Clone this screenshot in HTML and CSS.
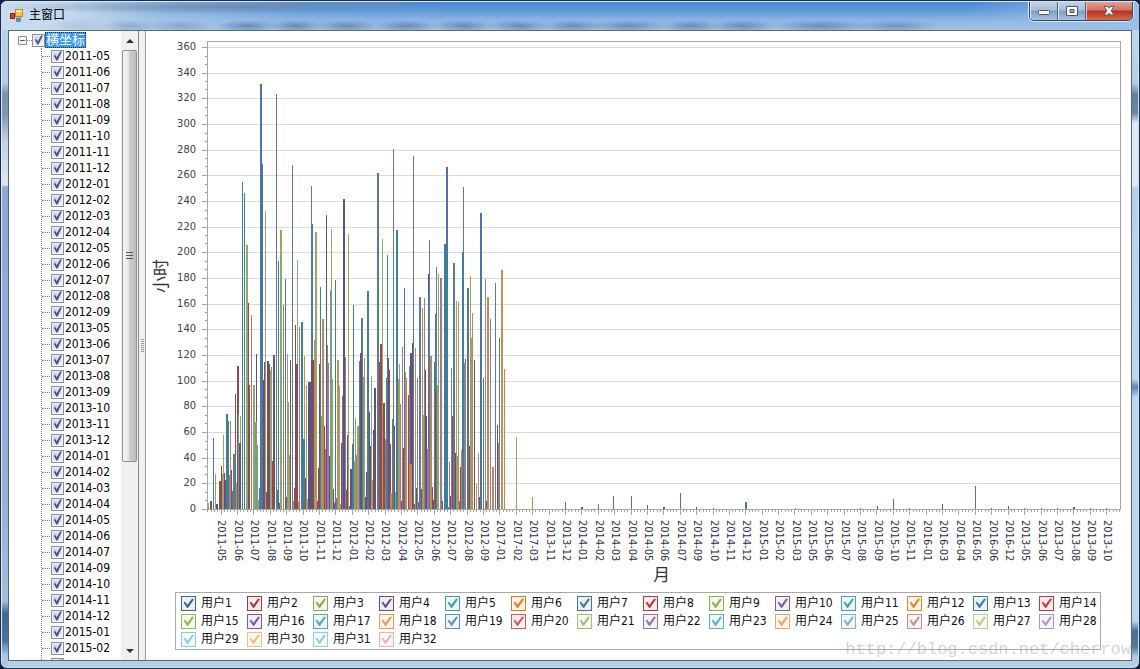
FILE: index.html
```html
<!DOCTYPE html>
<html lang="zh-CN">
<head>
<meta charset="utf-8">
<title>主窗口</title>
<link rel="stylesheet" href="styles.css">
</head>
<body>
<div class="window">
  <header class="titlebar">
    <svg class="app-icon" width="14" height="14" viewBox="0 0 14 14" aria-hidden="true">
      <rect x="5.5" y="1.5" width="7" height="7" fill="#f6c63c" stroke="#b98d1c"/>
      <rect x="6" y="2" width="6" height="2" fill="#fde58c"/>
      <rect x="0.5" y="5.5" width="4" height="5" fill="#d8402c" stroke="#8c1d16"/>
      <rect x="6.500" y="10" width="4" height="3.500" fill="#5c93b8" stroke="#3b6d91" stroke-width=".6"/>
    </svg>
    <h1 class="caption">主窗口</h1>
    <div class="controls">
      <button class="control" type="button" aria-label="最小化"><svg width="14" height="14" viewBox="0 0 14 14"><rect x="1.500" y="6.500" width="11" height="4" rx="1" fill="#fff" stroke="#4d5866"/></svg></button>
      <button class="control" type="button" aria-label="最大化"><svg width="14" height="14" viewBox="0 0 14 14"><path fill-rule="evenodd" d="M1.500 2.500h11v9h-11zM5 5.500v3h4v-3z" fill="#fff" stroke="#4d5866"/></svg></button>
      <button class="control control-close" type="button" aria-label="关闭"><svg width="14" height="14" viewBox="0 0 14 14"><path d="M2 2.500h3.500L7 4.300l1.500-1.800H12L9 6.700l3 4.300H8.500L7 9.200 5.500 11H2l3-4.300z" fill="#fff" stroke="#5d4a52" stroke-width=".9"/></svg></button>
    </div>
  </header>
  <main class="client">
    <aside class="tree-panel">
      <div class="tree">
        <div class="root">
          <button class="expander" type="button" aria-label="折叠"></button>
          <span class="dots"></span>
          <label class="node"><input class="tick" type="checkbox" checked><span class="selected">横坐标</span></label>
        </div>
        <div class="children" id="months"></div>
      </div>
      <div class="scrollbar">
        <span class="arrow arrow-up"></span>
        <span class="thumb"><i></i><i></i><i></i></span>
        <span class="track"></span>
        <span class="arrow arrow-down"></span>
      </div>
    </aside>
    <div class="splitter"><span class="grip"></span></div>
    <section class="chart-panel">
      <div class="chart">
        <div class="y-title"><span>小时</span></div>
        <div class="y-labels" id="y-labels"></div>
        <svg class="plot" id="plot" viewBox="202 41 919 477" preserveAspectRatio="none" shape-rendering="crispEdges"></svg>
        <div class="x-labels" id="x-labels"></div>
        <div class="x-title">月</div>
      </div>
      <div class="legend" id="legend"></div>
      <div class="watermark">http://blog.csdn.net/cherrow</div>
    </section>
  </main>
</div>
<script src="chart.js"></script>
</body>
</html>
```
FILE: styles.css
```css
* { box-sizing: border-box; }

body {
  margin: 0;
  background: #101d38;
  color: #111;
  font: 12px/16px "DejaVu Sans Condensed", "Noto Sans CJK SC", sans-serif;
}

.window {
  display: flex;
  flex-direction: column;
  height: 100vh;
  padding: 0 7px 7px;
  border: 1px solid #1b2c48;
  border-radius: 7px;
  background:
    linear-gradient(180deg, #b9d2ec 0, #b4cce6 82px, #7c94b0 92px, #8098b8 114px, #c4d2e4 140px, #dfe6f0 184px, #8fa8d4 186px, #98b0da 500px, #a4bedc 600px, #3f6a98 612px, #4a74a2 640px, #a9c6e2 654px) 0 0 / 7px 100% no-repeat,
    linear-gradient(180deg, #c9dcf0 0, #b4cce6 82px, #62809f 94px, #6c88a8 112px, #dfe8f3 122px, #dfe8f3 184px, #b4d0ee 187px, #bcd6ef 378px, #5f80b8 386px, #bcd6ef 396px, #bcd6ef 620px, #4a6f98 630px, #55799f 646px, #b4cce4 656px) 100% 0 / 7px 100% no-repeat,
    #b7cfe5;
  box-shadow: inset 1px 1px 0 #dcebfa, inset -1px -1px 0 #bfe4f5;
}

.titlebar {
  display: flex;
  flex: 0 0 29px;
  gap: 5px;
  margin: 0 -7px;
  padding-left: 9px;
  border-top: 1px solid #d9e8f8;
  border-radius: 6px 6px 0 0;
  background:
    radial-gradient(ellipse 30px 7px at 78px 24px, #6c8fb438, transparent),
    radial-gradient(ellipse 28px 6px at 128px 24px, #5d82ac70, transparent),
    radial-gradient(ellipse 34px 6px at 180px 24px, #5d82ac70, transparent),
    radial-gradient(ellipse 32px 6px at 246px 24px, #4f769fb0, transparent),
    radial-gradient(ellipse 28px 6px at 295px 24px, #4f769fb0, transparent),
    radial-gradient(ellipse 32px 6px at 346px 24px, #4f769fb0, transparent),
    radial-gradient(ellipse 32px 6px at 405px 24px, #4f769fb0, transparent),
    radial-gradient(ellipse 32px 6px at 462px 24px, #4f769fb0, transparent),
    radial-gradient(ellipse 32px 6px at 518px 24px, #4f769fb0, transparent),
    radial-gradient(ellipse 32px 6px at 572px 24px, #4f769fb0, transparent),
    radial-gradient(ellipse 40px 6px at 628px 24px, #4f769fb0, transparent),
    radial-gradient(ellipse 30px 6px at 690px 24px, #4f769fb0, transparent),
    radial-gradient(ellipse 34px 6px at 742px 24px, #4f769fb0, transparent),
    radial-gradient(ellipse 50px 6px at 820px 24px, #4f769fb0, transparent),
    radial-gradient(ellipse 44px 6px at 895px 24px, #4f769f90, transparent),
    radial-gradient(ellipse 230px 7px at 220px 5px, #65809fb0, transparent),
    linear-gradient(90deg, #cbdcee 0, #c3d7ed 70px, #a9c6e5b0 160px, #8cb6e333 300px, transparent 450px, transparent 85%, #9bbfe6 100%),
    linear-gradient(180deg, #4789d2 0, #5f9bdb 9px, #8bb5e4 18px, #a6c4e6 29px);
}

.app-icon { margin-top: 6px; }
.caption { flex: 1; margin: 5px 0 0; font-size: 12px; line-height: 16px; font-weight: 400; color: #000; }

.controls {
  display: flex;
  height: 19px;
  margin-right: 6px;
  border: 1px solid #35465f;
  border-top: 0;
  border-radius: 0 0 5px 5px;
  overflow: hidden;
  box-shadow: 0 0 0 1px #d2e4f6;
}
.control {
  display: grid;
  place-items: center;
  width: 28px;
  padding: 0;
  border: 0;
  border-right: 1px solid #4b6280;
  background: linear-gradient(#c1d3e6, #a6bdd6 45%, #7f9dbe 50%, #a5c4e2);
  box-shadow: inset 1px 0 0 #dbe8f5;
}
.control-close {
  width: 46px;
  border-right: 0;
  background: linear-gradient(#dfa294, #cf7564 45%, #b52f1c 50%, #d66c4d);
  box-shadow: inset 1px 0 0 #edbdb2;
}

.client {
  display: flex;
  flex: 1;
  min-height: 0;
  border: 1px solid #566a7c;
  background: #f0f0f0;
}

.tree-panel {
  display: flex;
  flex: 0 0 130px;
  background: #fff;
  border-right: 1px solid #828790;
}
.tree { flex: 1; padding: 1px 0 0 9px; overflow: hidden; }
.root { display: flex; align-items: center; height: 16px; }
.expander {
  width: 9px;
  height: 9px;
  padding: 0;
  border: 1px solid #848a94;
  border-radius: 1px;
  background: linear-gradient(#4a5a86, #4a5a86) center / 5px 1px no-repeat, #f4f4f4;
}
.dots { width: 5px; border-top: 1px dotted #808080; }
.node { display: flex; align-items: center; gap: 1px; height: 16px; color: #000; white-space: nowrap; }
.root .node { gap: 0; }
.selected { padding: 0 1px; background: #3399ff; color: #fff; outline: 1px dotted #2b2b2b; outline-offset: -1px; font-size: 13px; line-height: 16px; }
.children { margin-left: 23px; border-left: 1px dotted #808080; }
.children .node::before { content: ""; width: 8px; border-top: 1px dotted #808080; }

.tick {
  flex: none;
  appearance: none;
  width: 13px;
  height: 13px;
  margin: 0;
  border: 1px solid #8e8f8f;
  background: linear-gradient(135deg, #c8cfdc, #f4f6f9);
  box-shadow: inset 0 0 0 1px #f4f4f4;
}
.tick:checked::before, .series-tick:checked::before {
  content: "";
  display: block;
  width: 100%;
  height: 100%;
  background: #40528f;
  clip-path: polygon(16% 48%, 30% 40%, 44% 62%, 74% 8%, 90% 8%, 50% 90%, 40% 90%);
}

.scrollbar {
  display: flex;
  flex: 0 0 17px;
  flex-direction: column;
  align-items: center;
  background: #f0f0f0;
}
.arrow { flex: 0 0 19px; display: grid; place-items: center; }
.arrow::before { content: ""; border: 4px solid transparent; }
.arrow-up::before { border-top: 0; border-bottom-color: #303030; }
.arrow-down::before { border-bottom: 0; border-top-color: #303030; }
.thumb {
  display: flex;
  flex: 411 0 0;
  flex-direction: column;
  justify-content: center;
  align-items: center;
  gap: 2px;
  width: 15px;
  border: 1px solid #929292;
  border-radius: 2px;
  background: linear-gradient(90deg, #f5f5f5, #e6e6e8 45%, #cfcfd3 50%, #bcbcc1);
}
.thumb i { width: 7px; height: 1px; background: #555; }
.track { flex: 180 0 0; }

.splitter { display: grid; place-items: center; flex: 0 0 6px; background: #f0f0f0; }
.grip { width: 3px; height: 13px; background: repeating-linear-gradient(#9a9a9a 0 1px, #f0f0f0 1px 2px); }

.chart-panel {
  position: relative;
  display: flex;
  flex: 1;
  flex-direction: column;
  min-width: 0;
  padding-top: 10px;
  border-left: 1px solid #9a9da2;
  background: #fff;
}
.chart {
  display: grid;
  flex: 1;
  grid-template: minmax(0, 1fr) 43px 26px / 30px 26px minmax(0, 1fr);
  min-height: 0;
  padding-right: 10px;
}
.y-title { display: grid; place-items: center; padding-bottom: 8px; font-size: 17px; line-height: 20px; color: #303040; }
.y-title span { writing-mode: sideways-lr; }
.y-labels {
  display: flex;
  flex-direction: column;
  justify-content: space-between;
  padding: 6px 6px 9px 0;
  font-size: 11px;
  text-align: right;
  color: #404048;
}
.y-labels span { height: 0; line-height: 0; }
.plot { width: 100%; height: 100%; }
.x-labels { display: flex; grid-column: 3; padding: 2px 6px 0 11px; font-size: 11px; color: #303048; }
.x-labels span { flex: 1 1 0; min-width: 0; writing-mode: vertical-rl; line-height: 16px; white-space: nowrap; }
.x-title { grid-column: 3; text-align: center; font-size: 17px; line-height: 28px; color: #303040; }

.legend {
  display: grid;
  grid-template-columns: repeat(14, minmax(0, 1fr));
  margin: 5px 30px 10px 29px;
  padding: 1px 0;
  border: 1px solid #a8a8a8;
}
.series { display: flex; align-items: center; gap: 5px; height: 18px; padding-left: 5px; white-space: nowrap; color: #101020; }
.series-tick {
  flex: none;
  appearance: none;
  width: 15px;
  height: 15px;
  margin: 0;
  border: 1px solid var(--series);
  background: color-mix(in srgb, var(--series) 10%, white);
}
.series-tick:checked::before {
  background: var(--series);
  clip-path: polygon(12% 46%, 24% 40%, 42% 64%, 78% 16%, 92% 22%, 46% 88%, 38% 86%);
}

.watermark {
  position: absolute;
  right: 0;
  bottom: 0;
  font: 17px/20px "Liberation Mono", monospace;
  color: #9a9a9a70;
}

.grid-line { stroke: #dadada; }
.axis { fill: none; stroke: #a6a6a6; }
.minor { stroke: #a6a6a6; }
```
FILE: chart.js
```js
const two = n => String(n).padStart(2, "0");
const expand = spec => spec.split(" ").flatMap(part => {
  const [year, list] = part.split(":");
  return list.split(",").flatMap(piece => {
    const [from, to = from] = piece.split("-").map(Number);
    return Array.from({ length: to - from + 1 }, (_, i) => year + "-" + two(from + i));
  });
});

const treeMonths = expand("2011:5-12 2012:1-9 2013:5-12 2014:1-7,9-12 2015:1-2");
document.getElementById("months").innerHTML = treeMonths
  .map(m => `<label class="node"><input class="tick" type="checkbox" checked>${m}</label>`).join("") +
  `<div class="node"><input class="tick" type="checkbox" checked aria-label="2015-03"></div>`;

const axisMonths = expand("2011:5-12 2012:1-9 2017:1-3 2013:11-12 2014:1-7,9-12 2015:1-3,5-11 2016:1,3-6,12 2013:5-10");
document.getElementById("x-labels").innerHTML = axisMonths.map(m => `<span>${m}</span>`).join("");

let labels = "";
for (let v = 360; v >= 0; v -= 20) labels += `<span>${v}</span>`;
document.getElementById("y-labels").innerHTML = labels;

const seriesColors = [
  "#3c648c", "#a8383e", "#8fa458", "#66508a", "#3f9aa8", "#e07a20", "#4074a4",
  "#b83a40", "#8fae50", "#7a5c98", "#46a0b0", "#e8842c", "#4078ac", "#c03c48",
  "#94b850", "#74609c", "#50a8b8", "#e89a50", "#6090b0", "#c85c60", "#a0c070",
  "#8c78a8", "#60b0c4", "#f0a468", "#88b0cc", "#d08c8c", "#b8d088", "#a898c8",
  "#90ccd8", "#f0bc80", "#a0c8dc", "#e4b4b8"
];
document.getElementById("legend").innerHTML = seriesColors.map((c, i) =>
  `<label class="series"><input class="series-tick" type="checkbox" checked style="--series:${c}">用户${i + 1}</label>`).join("");

const palette = {
  b: "#4c74a6", t: "#3f8098", s: "#587d90", g: "#93a863", r: "#98484d",
  p: "#62507f", o: "#c6845a", y: "#b4965a", m: "#987a92", d: "#74a080"
};

/* Each bar: left edge, top edge, colour key and, when wider than one unit, its width. */
const bars = `208 503 g,210 501 p 2,213 438 t,215 474 g,216 504 p 2,219 481 r 3,221 466 r,222 474 g,223 435 g,
224 473 p,225 480 p,226 414 t 2,228 421 t,229 475 m,230 421 o,231 470 r,232 491 b,233 454 s 3,235 394 r,237 366 r 2,
238 414 d,236 483 g,240 416 g,239 443 p 2,242 182 t,244 193 t,246 245 g 2,248 303 r,249 385 r,251 315 m,253 385 g 2,
255 422 d 2,256 354 p,257 445 d,258 500 g,259 488 b,260 84 b 2,262 164 t,263 380 p,264 362 r,265 211 g,266 492 r,
267 361 p 2,269 364 r,270 370 g 2,271 367 m,272 461 r 2,273 355 p 2,276 94 s,278 261 t,277 490 t,279 503 r,280 230 g 2,
283 305 m,285 279 t,286 497 r,287 354 y,288 402 g,289 455 g,290 360 p,292 165 s,293 501 y,294 488 r 2,295 325 p,296 364 r 2,
297 260 g,298 502 y,299 327 m,301 322 t 2,303 439 t 2,304 356 y,305 478 r,306 385 g,307 499 g,308 382 p 3,311 360 p 2,
311 186 s,312 224 t,313 360 r,314 340 y 2,315 232 g 2,317 501 r,318 468 r,319 364 r,320 287 t,321 416 g,322 319 o 2,
324 426 r,325 449 m,326 215 p,327 345 m,328 363 m,329 456 p,330 290 d 2,331 229 g,332 379 g,333 489 r,335 280 t,334 503 p,
336 498 b,337 360 y 2,339 386 y,340 504 y,341 443 p,342 396 s,343 199 p 2,345 357 m,346 490 r,347 435 r,348 234 g,
349 506 b,350 469 p 2,352 444 t,353 305 t,354 461 y,355 418 y,356 455 m,357 426 g 2,359 361 s,360 353 p 2,361 318 s 2,
363 377 d,364 358 y,365 497 p,366 472 p,367 291 t 2,369 412 p,370 446 r,371 376 g,371 480 y 2,373 430 p,374 388 p 2,
377 173 s 2,379 362 r,380 344 r 2,382 239 g,383 403 r 2,385 439 m,386 378 s,387 255 t,388 358 p,389 370 r,390 444 r,
390 493 o 2,393 149 s,392 419 s,394 426 p,395 492 g,396 230 t 2,398 379 y 2,399 364 y,400 404 m,401 501 p,402 347 m,
403 448 r,404 288 t,405 372 o,406 378 o,408 395 r,409 366 m,410 353 p 2,409 464 o 3,412 343 p,413 156 s,414 504 r,
415 348 o,416 488 p,417 378 m,418 502 b,419 297 s 2,421 489 p,422 308 o,422 415 y 2,424 298 m,425 370 p,426 416 p,
427 449 m 2,428 274 p,429 240 s,428 292 b,430 356 o 2,432 487 r,433 500 p,434 362 t,435 314 t,436 267 s,435 392 r,
437 385 g,438 274 g,440 278 m 2,442 501 p,444 244 t 3,446 167 b 2,448 507 b,449 462 m,450 496 p,451 368 m,452 416 r,
453 263 s 2,455 453 p,456 301 g,457 456 y,458 302 o,459 501 s,460 467 r,461 450 o,462 252 t 2,463 187 s,464 363 m 2,
465 359 p,467 288 t 2,469 446 r,470 276 y,471 338 y,472 313 o,474 360 p,476 484 g,478 453 o,479 497 p,480 213 b 2,
483 378 s,485 279 d,486 501 r,487 297 o 2,490 319 m,492 467 o 2,495 283 s,497 425 p,498 443 m 2,499 338 s,501 270 y 2,
504 369 o,516 437 y,532 497 o,565 502 b,581 507 p 2,598 504 s,613 496 b,631 496 b,647 505 b,663 507 p 2,680 493 b,
696 507 p,713 508 s,745 502 b 2,795 508 s,860 508 s,877 506 p,893 499 b,909 508 s,942 504 p,975 486 b,991 508 p,
1008 506 p,1024 508 s,1041 508 s,1057 508 s,1073 507 p 2,1090 508 s,1106 508 s`;

const left = 207, right = 1120, top0 = 41, base = 509, step = 462 / 18;
let svg = "";
for (let i = 0; i <= 18; i++) {
  const y = Math.round(base - i * step);
  svg += `<path class="grid-line" d="M${left} ${y + .5}H${right}"/><path class="minor" d="M202 ${y + .5}H${left}"/>`;
  for (let k = 1; k < 3 && i < 18; k++)
    svg += `<path class="minor" d="M205 ${Math.round(y - k * step / 3) + .5}H${left}"/>`;
}
bars.split(",").map(row => row.trim().split(" ")).sort((a, b) => a[1] - b[1])
  .forEach(([x, y, c, w = 1]) => {
    svg += `<rect x="${x}" y="${y}" width="${w}" height="${base - y}" fill="${palette[c]}"/>`;
  });
const month = 16.4;
for (let i = -4; i <= 274; i++) {
  const x = Math.floor(221 + i * month / 5);
  svg += `<path class="minor" d="M${x + .5} ${base}V${i % 5 ? base + 3 : base + 6}"/>`;
}
svg += `<path class="axis" d="M${left + .5} ${top0 + .5}H${right + .5}V${base + .5}H${left + .5}Z"/>`;
document.getElementById("plot").innerHTML = svg;
```
